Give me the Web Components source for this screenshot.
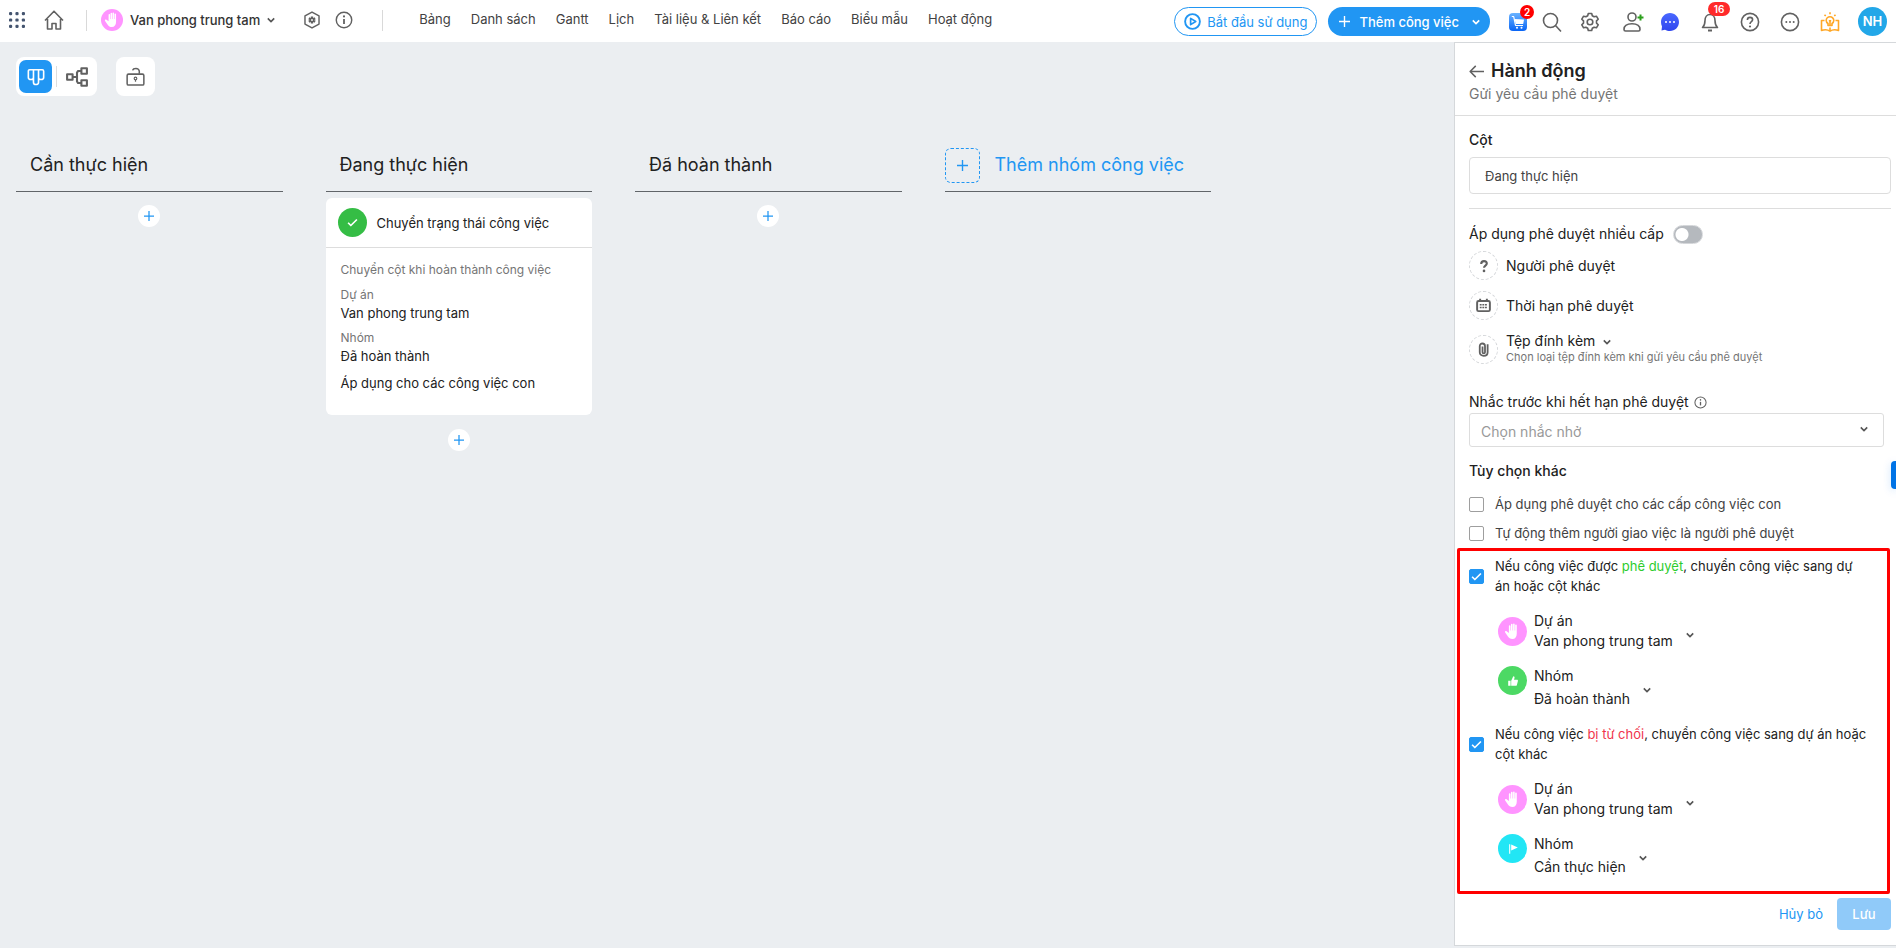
<!DOCTYPE html>
<html lang="vi">
<head>
<meta charset="utf-8">
<meta name="viewport" content="width=device-width, initial-scale=1">
<title>Van phong trung tam</title>
<style>
  body { margin: 0; font: 14px/20px Inter, "Noto Sans", sans-serif; color: #212121; background: #ebeef1; font-optical-sizing: none; }
</style>
</head>
<body>
<work-app></work-app>
<script>
const ICONS = {
  dots: '<g fill="#44546f" stroke="none">' + [2, 10, 18].map(y => [2, 10, 18].map(x => `<rect x="${x - 2}" y="${y - 2}" width="4" height="4" rx="1.5"/>`).join('')).join('') + '</g>',
  home: '<path d="M1 10.5 10 1.2l9 9.3M3.5 9v10H8v-5.500h4V19h4.500V9"/>',
  hand: '<path fill="currentColor" stroke="none" d="M6.200 11.500V4.300a.85.85 0 0 1 1.700 0V9h.5V2.700a.85.85 0 0 1 1.700 0V9h.5V2.500a.85.85 0 0 1 1.700 0V9h.5V3.500a.85.85 0 0 1 1.700 0V12c0 3.700-1.700 5.800-4.600 5.800-2.300 0-3.600-1-4.700-2.600L2.300 11c-.7-1 .5-2 1.500-1.200z"/>',
  chevron: '<path stroke-width="4" d="m2 6 8 8 8-8"/>',
  hexgear: '<path d="m10 1.200 7.800 4.300v9L10 18.800l-7.800-4.300v-9z"/><path stroke-width="2.600" d="M10 6v8M6.500 8l7 4M13.500 8l-7 4"/><circle cx="10" cy="10" r="1" fill="#fff" stroke="none"/>',
  info: '<circle cx="10" cy="10" r="8.600"/><path d="M10 9v5.500" stroke-width="2"/><circle cx="10" cy="6" r="1.200" fill="currentColor" stroke="none"/>',
  play: '<circle cx="10" cy="10" r="8.700" stroke-width="2.200"/><path d="M7.800 6.300v7.400l6-3.700z" stroke-width="2"/>',
  plus: '<path stroke-width="2.500" d="M10 0v20M0 10h20"/>',
  search: '<circle cx="10.500" cy="8.500" r="7"/><path d="m15.500 13.500 5.500 6"/>',
  gear: '<path d="m8.300 1.500-.6 2.300-1.800 1-2.300-.6-1.800 3 1.700 1.700v2.200l-1.700 1.700 1.800 3 2.300-.6 1.800 1 .6 2.300h3.400l.6-2.300 1.800-1 2.300.6 1.800-3-1.700-1.700V8.900l1.700-1.700-1.800-3-2.300.6-1.800-1-.6-2.300z"/><circle cx="10" cy="10" r="2.800"/>',
  user: '<circle cx="12" cy="5" r="4"/><path d="M4 17.500c0-4 3.500-5.700 8-5.700s8 1.700 8 5.700c0 1-.5 1.500-1.500 1.500h-13c-1 0-1.500-.5-1.500-1.500z"/><path stroke="#2ca01c" stroke-width="2" d="M20.500 2.500v6M17.500 5.500h6"/>',
  bell: '<path d="M2.500 15.500c2-1.800 2.500-3.500 2.500-7C5 5 7 2.500 10 2.500S15 5 15 8.500c0 3.500.5 5.200 2.500 7z"/><path d="M8 18.500h4" stroke-width="2"/>',
  help: '<circle cx="10" cy="10" r="8.600"/><path d="M7.400 8c0-1.700 1.100-2.600 2.600-2.600s2.600 1 2.600 2.400c0 1.900-2.600 2-2.600 4.200"/><circle cx="10" cy="14.500" r="1.100" fill="currentColor" stroke="none"/>',
  more: '<circle cx="10" cy="10" r="8.600"/><g fill="currentColor" stroke="none"><circle cx="6.300" cy="10" r="1"/><circle cx="10" cy="10" r="1"/><circle cx="13.700" cy="10" r="1"/></g>',
  chat: '<defs><linearGradient id="c" x2="0" y2="1"><stop stop-color="#4a68ff"/><stop offset="1" stop-color="#3046ee"/></linearGradient></defs><path fill="url(#c)" stroke="none" d="M10 1c5 0 9 4 9 9s-4 9-9 9c-2 0-3.500-.4-5-1.200L1.500 18.500l.5-4C1.300 13 1 11.500 1 10c0-5 4-9 9-9z"/><g fill="#fff" stroke="none"><circle cx="6" cy="10" r="1"/><circle cx="10" cy="10" r="1"/><circle cx="14" cy="10" r="1"/></g>',
  cart: '<defs><linearGradient id="k" x2="0" y2="1"><stop stop-color="#6ab3ff"/><stop offset="1" stop-color="#0864f5"/></linearGradient></defs><rect x="1" y="1" width="18" height="18" rx="4" fill="url(#k)" stroke="none"/><path fill="#fff" stroke="none" d="M6.500 7 16 7.500l-.8 4.500H7.800z"/><path stroke="#fff" stroke-width="1.200" d="M3.800 4.500h1.900l1.800 9H15"/><circle cx="9" cy="15.800" r="1" fill="#fff" stroke="none"/><circle cx="13.500" cy="15.800" r="1" fill="#fff" stroke="none"/>',
  bulb: '<g stroke="#ffa726"><path d="M4.500 8.500H1.500v10c3-1 6-1 8.500.7 2.500-1.700 5.500-1.700 8.500-.7v-10h-3M10 15.500V19"/><path d="M8 13.500v-2C6.700 10.600 6.200 9.600 6.200 8.500a3.800 3.800 0 0 1 7.600 0c0 1.100-.5 2.100-1.800 3v2z"/><path d="M10 13V9.500M8.800 8.800h2.400M10 .300v2M4.500 2.700 5.700 4M15.500 2.700 14.300 4"/></g>',
  board: '<path stroke-width="1.800" d="M7.200 2v8.500c0 3-5.700 3-5.700 0V3.500Q1.500 2 3 2h14q1.500 0 1.500 1.500v7c0 3-5.700 3-5.700 0V2M7.200 10v6c0 3.200 5.600 3.200 5.600 0v-6M7.200 2h5.600"/>',
  flow: '<g stroke-width="1.900"><rect x="1" y="7.500" width="5" height="5"/><rect x="14" y="2" width="5" height="5"/><rect x="14" y="13" width="5" height="5"/><path d="M6 10h4M14 4.500h-3L10 6v8l1 1.500h3"/></g>',
  lock: '<rect x="1.200" y="7.500" width="17.600" height="11.500" rx="1.500"/><path d="M14 7V4.500C14 2.700 12.500 1.500 10.500 1.500S7.300 2.300 7 3.500"/><circle cx="10" cy="12" r="1.400" stroke-width="1.200"/><path d="M10 13.500v2" stroke-width="1.300"/>',
  check: '<path stroke-width="3" d="m2 10.500 5 5 11-11"/>',
  back: '<path stroke-width="2" d="M20 10H1.500M9 2.500 1.500 10 9 17.500"/>',
  ask: '<path stroke-width="3" d="M6 7c0-2.500 1.500-4 4-4s4 1.500 4 3.600c0 2.900-4 2.900-4 5.900"/><circle cx="10" cy="17" r="1.900" fill="currentColor" stroke="none"/>',
  calendar: '<rect x="1.500" y="4" width="17" height="13.500" rx="2" stroke-width="2.600"/><path stroke-width="2.600" d="M5.500 1V4M14.500 1V4"/><path stroke-width="2" stroke-dasharray="2.500 1" d="M5 9h10M5 12.800h10"/>',
  clip: '<path stroke-width="2.400" d="M15.500 3v10.500c0 6.500-10.500 6.500-10.500 0V5.500c0-4.700 7-4.700 7 0v8c0 2.200-3.300 2.200-3.300 0V6"/>',
  thumb: '<path fill="currentColor" stroke="none" d="M2 9.500h4V18H2zM7 9.500 10.500 2c1.800 0 2.500 1.300 2 3l-.8 3h5c1.300 0 1.800 1 1.500 2l-1.700 6.500c-.2 1-1 1.500-2 1.500H7z"/>',
  flag: '<path stroke-width="1.800" d="M4.500 2v16"/><path fill="currentColor" stroke="none" d="m7 2.500 11 5-11 5z"/>'
};

/* Defines an element whose open shadow root is filled from a template. */
function define(name, css, html) {
  customElements.define(name, class extends HTMLElement {
    connectedCallback() {
      if (this.shadowRoot) return;
      const tpl = document.createElement('template');
      tpl.innerHTML = `<style>*{box-sizing:border-box}button,input,select{font:inherit;font-optical-sizing:inherit;color:inherit}button{background:none;border:0;padding:0;cursor:pointer}${css}</style>` +
        (typeof html === 'function' ? html(this) : html);
      this.attachShadow({ mode: 'open' }).append(tpl.content.cloneNode(true));
    }
  });
}

define('ui-icon', ':host{display:inline-flex;flex:none;width:var(--size,20px);height:var(--size,20px)}svg{width:100%;height:100%;overflow:visible}',
  el => `<svg viewBox="0 0 20 20" fill="none" stroke="currentColor" stroke-width="1.600" stroke-linejoin="round" aria-hidden="true">${ICONS[el.getAttribute('name')]}</svg>`);

define('ui-disc', `:host{display:flex;flex:none;align-items:center;justify-content:center;width:var(--disc,29px);height:var(--disc,29px);border-radius:50%;background:var(--fill);color:#fff}
  :host([dashed]){border:1px dashed #d5d7da;color:#616161}
  ui-icon{--size:var(--glyph,16px)}`,
  el => `<ui-icon name="${el.getAttribute('icon')}"></ui-icon>`);

define('app-header', `
  :host{display:flex;align-items:center;justify-content:space-between;height:42px;background:#fff;color:#616161;padding:0 9px 2px;font-size:13px}
  div,nav,button{display:flex;align-items:center}
  .rule{width:1px;height:21px;background:#d9d9d9}
  .project{gap:7px;font-weight:500;color:#333;margin-left:14px}
  .project ui-icon{--size:8px;color:#555}
  ui-disc{--disc:22px;--glyph:18px;--fill:#ff94ff}
  .dots{--size:16px;margin-right:19px}
  .home{margin-right:22px}
  .set{--size:18px;margin-left:28px}
  .inf{--size:18px;margin:0 29px 0 14px}
  nav{gap:20px;margin-left:36px;white-space:nowrap;line-height:18px;padding-bottom:2px}
  a{color:#424242;text-decoration:none}
  .pill{height:29px;border-radius:15px;white-space:nowrap;margin-top:3px}
  .start{border:1px solid #2196f3;color:#2196f3;padding:0 9px;gap:6px;margin-right:11px}
  .start ui-icon{--size:17px}
  .add{background:#2196f3;color:#fff;font-weight:500;padding:0 10px 0 11px;gap:9px;margin-right:18px}
  .add ui-icon{--size:11px}
  .add ui-icon:last-child{--size:8px;margin:0 0 0 4px}
  .icons{gap:20px}
  .icons button{position:relative;height:20px;margin-top:3px}
  .icons .cart{margin-right:-8px}
  .badge{position:absolute;background:#f00;color:#fff;font:600 10px/14px Inter,sans-serif;min-width:14px;border-radius:7px;text-align:center;left:12px;top:-7px}
  .badge.wide{width:22px;background:#ff2a2a;left:8px;top:-10px}
  .icons .avatar{height:29px;width:29px;margin:2px 0 0 -2px;border-radius:50%;background:#22a7e8;color:#fff;font-weight:600;justify-content:center}
`, `
  <div>
    <button aria-label="Menu"><ui-icon class="dots" name="dots"></ui-icon></button>
    <button aria-label="Home"><ui-icon class="home" name="home"></ui-icon></button>
    <span class="rule"></span>
    <button class="project"><ui-disc icon="hand"></ui-disc>Van phong trung tam<ui-icon name="chevron"></ui-icon></button>
    <button aria-label="Setup"><ui-icon class="set" name="hexgear"></ui-icon></button>
    <button aria-label="Info"><ui-icon class="inf" name="info"></ui-icon></button>
    <span class="rule"></span>
    <nav><a href="#">Bảng</a><a href="#">Danh sách</a><a href="#">Gantt</a><a href="#">Lịch</a><a href="#">Tài liệu &amp; Liên kết</a><a href="#">Báo cáo</a><a href="#">Biểu mẫu</a><a href="#">Hoạt động</a></nav>
  </div>
  <div>
    <button class="pill start"><ui-icon name="play"></ui-icon>Bắt đầu sử dụng</button>
    <button class="pill add"><ui-icon name="plus"></ui-icon>Thêm công việc<ui-icon name="chevron"></ui-icon></button>
    <div class="icons">
      <button class="cart" aria-label="Shop"><ui-icon name="cart"></ui-icon><span class="badge">2</span></button>
      <button aria-label="Search"><ui-icon name="search"></ui-icon></button>
      <button aria-label="Settings"><ui-icon name="gear"></ui-icon></button>
      <button aria-label="Invite"><ui-icon name="user"></ui-icon></button>
      <button aria-label="Chat"><ui-icon name="chat"></ui-icon></button>
      <button aria-label="Notifications"><ui-icon name="bell"></ui-icon><span class="badge wide">16</span></button>
      <button aria-label="Help"><ui-icon name="help"></ui-icon></button>
      <button aria-label="More"><ui-icon name="more"></ui-icon></button>
      <button aria-label="Guide"><ui-icon name="bulb"></ui-icon></button>
      <button class="avatar">NH</button>
    </div>
  </div>`);

define('view-tools', `
  :host{display:flex;gap:19px;color:#616161}
  div{display:flex;align-items:center;background:#fff;border-radius:8px;padding:3px;height:39px}
  button{display:flex;align-items:center;justify-content:center;width:33px;height:33px;border-radius:7px}
  .on{background:#2196f3;color:#fff}
  i{width:1px;height:21px;background:#ddd;margin:0 3px 0 4px}
  .flow{width:34px}
`, `<div><button class="on" aria-label="Board"><ui-icon name="board" style="--size:18px"></ui-icon></button><i></i><button class="flow" aria-label="Flow"><ui-icon name="flow" style="--size:22px"></ui-icon></button></div>
    <div><button aria-label="Lock"><ui-icon name="lock" style="--size:19px"></ui-icon></button></div>`);

define('board-column', `
  :host{display:flex;flex-direction:column;align-items:stretch}
  h2{margin:0 0 6px;height:53px;padding:0 14px;display:flex;align-items:center;font:400 18px/26px Inter,sans-serif;font-optical-sizing:none;border-bottom:1px solid #616569}
  .add{align-self:center;display:flex;align-items:center;justify-content:center;width:22px;height:22px;border-radius:50%;background:#fff;color:#2196f3;margin-top:7px}
  ::slotted(task-card){margin-bottom:7px}
  ui-icon{--size:10px}
`, el => `<h2>${el.getAttribute('heading')}</h2><slot></slot><button class="add" aria-label="Thêm"><ui-icon name="plus"></ui-icon></button>`);

define('new-column', `
  :host{display:block}
  button{display:flex;align-items:center;gap:15px;width:100%;height:53px;border-bottom:1px solid #616569;color:#2196f3;font-size:18px;line-height:26px;white-space:nowrap}
  span{display:flex;align-items:center;justify-content:center;width:35px;height:35px;border:1px dashed #2196f3;border-radius:6px}
  ui-icon{--size:11px}
`, '<button><span><ui-icon name="plus"></ui-icon></span><slot></slot></button>');

define('task-card', `
  :host{display:block;background:#fff;border-radius:6px;font-size:13px}
  header{display:flex;align-items:center;gap:10px;padding:0 12px;height:50px;border-bottom:1px solid #ddd}
  ui-disc{--fill:#35bd45;--glyph:11px}
  .body{padding:12px 15px 22px}
  p,dl,dd{margin:0} p,dt{color:#757575} dl{margin:7px 0 6px}
  .note,dt{font-size:12px} dt{line-height:16px} dd{margin-bottom:7px} .last{color:inherit}
`, `<header><ui-disc icon="check"></ui-disc><slot name="title"></slot></header>
    <div class="body"><p class="note"><slot name="note"></slot></p>
    <dl><dt>Dự án</dt><dd><slot name="project"></slot></dd><dt>Nhóm</dt><dd><slot name="group"></slot></dd></dl>
    <p class="last"><slot name="scope"></slot></p></div>`);

define('check-option', `
  :host{display:block}
  input{appearance:none;flex:none;margin:0;width:15px;height:15px;border:1px solid #9e9e9e;border-radius:2px;background:#fff}
  input:checked{border-color:#2196f3;background:#2196f3}
  label{display:flex;align-items:center;gap:11px;position:relative}
  ui-icon{position:absolute;left:2px;color:#fff;--size:11px}
`, el => `<label><input type="checkbox"${el.hasAttribute('checked') ? ' checked' : ''}>${el.hasAttribute('checked') ? '<ui-icon name="check"></ui-icon>' : ''}<span><slot></slot></span></label>`);

define('target-picker', `
  :host{display:flex;align-items:center;gap:7px;margin-left:29px}
  :host([loose]){align-items:flex-start}
  label{display:block}
  .field{display:flex;flex-direction:column}
  :host([loose]) .field{gap:3px}
  select{appearance:none;border:0;background:none;padding:0;height:20px;field-sizing:content}
  ui-icon{--size:8px;color:#555;margin:7px 0 0 6px}
  :host([loose]) ui-icon{margin-top:20px}
`, el => `<ui-disc icon="${el.getAttribute('icon')}"></ui-disc>
    <div class="field"><label for="s">${el.getAttribute('label')}</label><select id="s"><option>${el.getAttribute('value')}</option></select></div>
    <ui-icon name="chevron"></ui-icon>`);

define('action-panel', `
  :host{display:flex;flex-direction:column;background:#fff;border:solid #d5d8db;border-width:1px 0 1px 1px}
  header{padding:15px 14px 11px;border-bottom:1px solid #ddd;color:#757575}
  h1{margin:0;display:flex;align-items:center;gap:7px;font:600 18px/26px Inter,sans-serif;color:#212121}
  .back{display:flex;--size:15px;color:#616161}
  .body{padding:14px 5px 4px 14px;display:flex;flex-direction:column}
  .strong{font-weight:500}
  .text{height:37px;border:1px solid #ddd;border-radius:4px;padding:0 15px;margin:7px 0 14px;font-size:13px;color:#424242;width:100%}
  hr{border:0;border-top:1px solid #ddd;margin:0 0 15px;width:100%}
  .levels{display:flex;align-items:center;gap:9px}
  .switch{appearance:none;margin:0;width:30px;height:19px;border-radius:10px;border:1px solid #d5d7da;background:radial-gradient(circle at 8px 50%,#fff 6px,#b5b9be 7px)}
  ul{list-style:none;margin:7px 0 28px;padding:0;display:flex;flex-direction:column;gap:11px}
  li{display:flex;align-items:center;gap:8px}
  li:last-child{align-items:flex-end}
  li small{display:block;font-size:11px;line-height:13px;color:#757575}
  li button ui-icon{--size:8px;margin-left:8px;color:#555}
  .remind{display:flex;align-items:center;gap:5px;--size:13px}
  .remind ui-icon{color:#616161}
  .select{display:grid;align-items:center;margin:1px 7px 14px 0}
  .select>*{grid-area:1/1}
  .select select{appearance:none;width:100%;height:34px;border:1px solid #ddd;border-radius:3px;background:#fff;color:#999;padding:4px 11px 0}
  .select ui-icon{--size:8px;color:#555;justify-self:end;margin:0 16px 2px 0}
  .plain{font-size:13px;display:flex;flex-direction:column;gap:9px;margin:13px 0 5px;color:#424242}
  section{border:3px solid #f00;border-radius:2px;margin:0 1px 0 -12px;padding:5px 17px 14px 9px;display:flex;flex-direction:column;gap:15px}
  section check-option{font-size:13px}
  .ok{color:#2ecc2e}.no{color:#f0344c}
  .pink{--fill:#ff94ff;--glyph:19px}.green{--fill:#4cd964;--glyph:12px}.cyan{--fill:#22e6f5;--glyph:12px}
  footer{display:flex;justify-content:flex-end;align-items:center;gap:14px;padding:0 5px 15px;color:#2196f3;font-size:13px}
  .save{width:54px;height:32px;border-radius:4px;background:#90caf9;color:#fff;font-weight:500}
`, `
  <header><h1><button class="back" aria-label="Back"><ui-icon name="back"></ui-icon></button>Hành động</h1>Gửi yêu cầu phê duyệt</header>
  <div class="body">
    <label class="strong" for="col">Cột</label>
    <input class="text" id="col" type="text" value="Đang thực hiện">
    <hr>
    <div class="levels"><label for="lv">Áp dụng phê duyệt nhiều cấp</label><input class="switch" id="lv" type="checkbox"></div>
    <ul>
      <li><ui-disc dashed icon="ask" style="--glyph:14px"></ui-disc><button>Người phê duyệt</button></li>
      <li><ui-disc dashed icon="calendar" style="--glyph:15px"></ui-disc><button>Thời hạn phê duyệt</button></li>
      <li><ui-disc dashed icon="clip" style="--glyph:15px"></ui-disc><div><button>Tệp đính kèm<ui-icon name="chevron"></ui-icon></button><small>Chọn loại tệp đính kèm khi gửi yêu cầu phê duyệt</small></div></li>
    </ul>
    <div class="remind"><label for="rm">Nhắc trước khi hết hạn phê duyệt</label><ui-icon name="info"></ui-icon></div>
    <div class="select"><select id="rm"><option>Chọn nhắc nhở</option></select><ui-icon name="chevron"></ui-icon></div>
    <span class="strong">Tùy chọn khác</span>
    <div class="plain">
      <check-option>Áp dụng phê duyệt cho các cấp công việc con</check-option>
      <check-option>Tự động thêm người giao việc là người phê duyệt</check-option>
    </div>
    <section>
      <check-option checked>Nếu công việc được <span class="ok">phê duyệt</span>, chuyển công việc sang dự án hoặc cột khác</check-option>
      <target-picker class="pink" icon="hand" label="Dự án" value="Van phong trung tam"></target-picker>
      <target-picker loose class="green" icon="thumb" label="Nhóm" value="Đã hoàn thành"></target-picker>
      <check-option checked>Nếu công việc <span class="no">bị từ chối</span>, chuyển công việc sang dự án hoặc cột khác</check-option>
      <target-picker class="pink" icon="hand" label="Dự án" value="Van phong trung tam"></target-picker>
      <target-picker loose class="cyan" icon="flag" label="Nhóm" value="Cần thực hiện"></target-picker>
    </section>
  </div>
  <footer><button>Hủy bỏ</button><button class="save">Lưu</button></footer>`);

define('work-app', `
  :host{display:flex;flex-direction:column;min-height:100vh}
  main{display:flex;flex:1;align-items:flex-start}
  .work{flex:1;min-width:0;padding:15px 16px}
  .board{display:grid;grid-template-columns:repeat(4,minmax(0,1fr));gap:43px;max-width:1195px;margin-top:43px;align-items:start}
  action-panel{flex:0 0 442px}
  .tab{position:fixed;right:0;top:461px;width:5px;height:28px;background:#0073e6;border-radius:4px 0 0 4px;box-shadow:0 2px 8px #0073e633}
`, `
  <app-header></app-header>
  <main>
    <div class="work">
      <view-tools></view-tools>
      <div class="board">
        <board-column heading="Cần thực hiện"></board-column>
        <board-column heading="Đang thực hiện">
          <task-card>
            <span slot="title">Chuyển trạng thái công việc</span>
            <span slot="note">Chuyển cột khi hoàn thành công việc</span>
            <span slot="project">Van phong trung tam</span>
            <span slot="group">Đã hoàn thành</span>
            <span slot="scope">Áp dụng cho các công việc con</span>
          </task-card>
        </board-column>
        <board-column heading="Đã hoàn thành"></board-column>
        <new-column>Thêm nhóm công việc</new-column>
      </div>
    </div>
    <action-panel></action-panel>
  </main>
  <button class="tab" aria-label="Support"></button>`);
</script>
</body>
</html>
